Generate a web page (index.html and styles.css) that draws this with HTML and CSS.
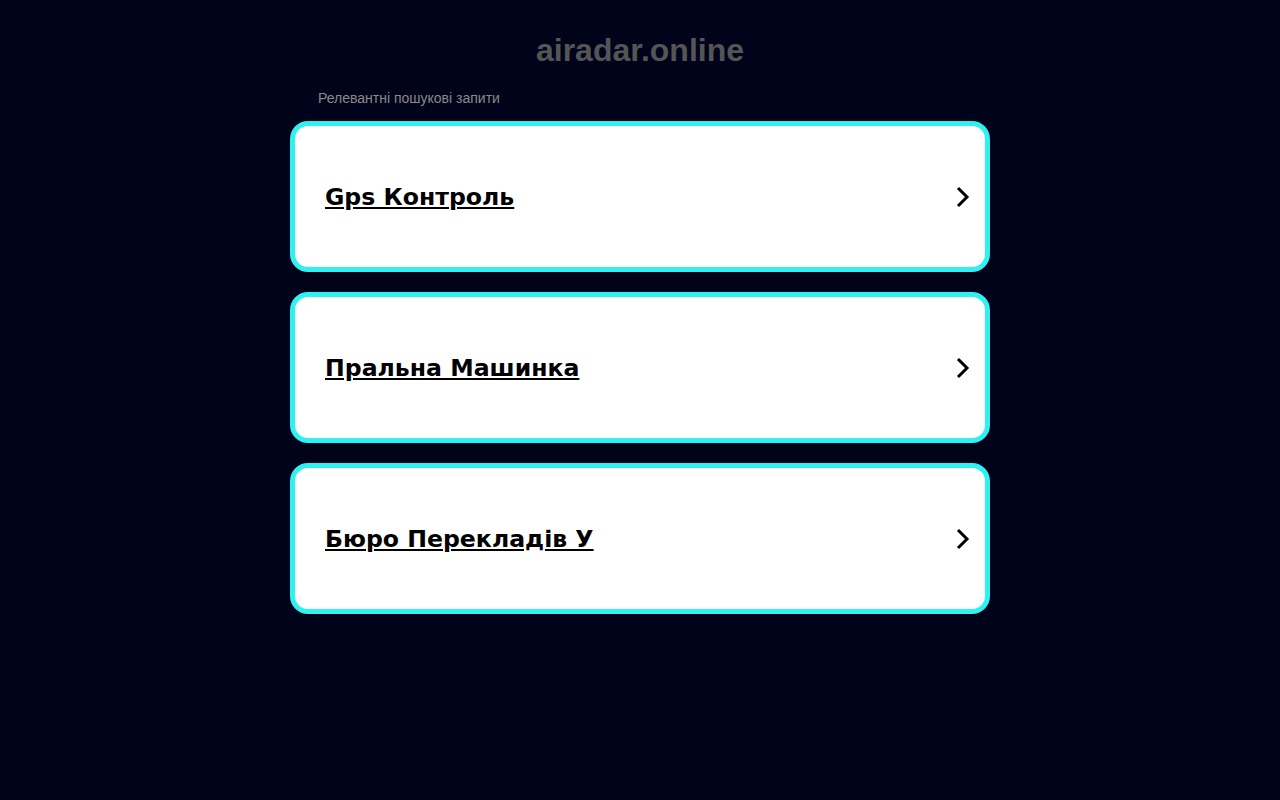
FILE: index.html
```html
<!DOCTYPE html>
<html>
<head>
    <title>airadar.online</title>
    <link rel="stylesheet" href="styles.css">
</head>
<body>
    <div class="page">
        <h1 class="domain">airadar.online</h1>
        <div class="related">Релевантні пошукові запити</div>

        <div class="links">
            <a class="link-card" href="#">
                <span class="link-title">Gps Контроль</span>
                <svg class="chevron" viewBox="0 0 16 22" width="16" height="22"><path d="M3 2 L12 11 L3 20" fill="none" stroke="#000" stroke-width="3"/></svg>
            </a>
            <a class="link-card" href="#">
                <span class="link-title">Пральна Машинка</span>
                <svg class="chevron" viewBox="0 0 16 22" width="16" height="22"><path d="M3 2 L12 11 L3 20" fill="none" stroke="#000" stroke-width="3"/></svg>
            </a>
            <a class="link-card" href="#">
                <span class="link-title">Бюро Перекладів У</span>
                <svg class="chevron" viewBox="0 0 16 22" width="16" height="22"><path d="M3 2 L12 11 L3 20" fill="none" stroke="#000" stroke-width="3"/></svg>
            </a>
        </div>
    </div>
</body>
</html>
```

FILE: styles.css
```css
* {
    margin: 0;
    padding: 0;
    box-sizing: border-box;
}

body {
    background: #000319;
    font-family: 'Liberation Sans', Arial, sans-serif;
}

.page {
    width: 700px;
    margin: 0 auto;
    padding-top: 31px;
}

.domain {
    text-align: center;
    font-size: 32px;
    font-weight: bold;
    color: #555555;
    line-height: 38px;
}

.related {
    font-size: 14px;
    color: #8a8a8a;
    padding-left: 28px;
    margin-top: 19px;
    line-height: 20px;
}

.links {
    display: flex;
    flex-direction: column;
    gap: 20px;
    margin-top: 13px;
}

.link-card {
    display: flex;
    align-items: center;
    justify-content: space-between;
    height: 151px;
    background: #ffffff;
    border: 5px solid #2ef2f2;
    border-radius: 18px;
    padding: 0 14px 0 30px;
    color: #000;
    text-decoration: none;
}

.link-title {
    font-family: 'DejaVu Sans', sans-serif;
    font-weight: bold;
    font-size: 23.6px;
    text-decoration: underline;
    color: #000;
}

.chevron {
    display: block;
}
```
